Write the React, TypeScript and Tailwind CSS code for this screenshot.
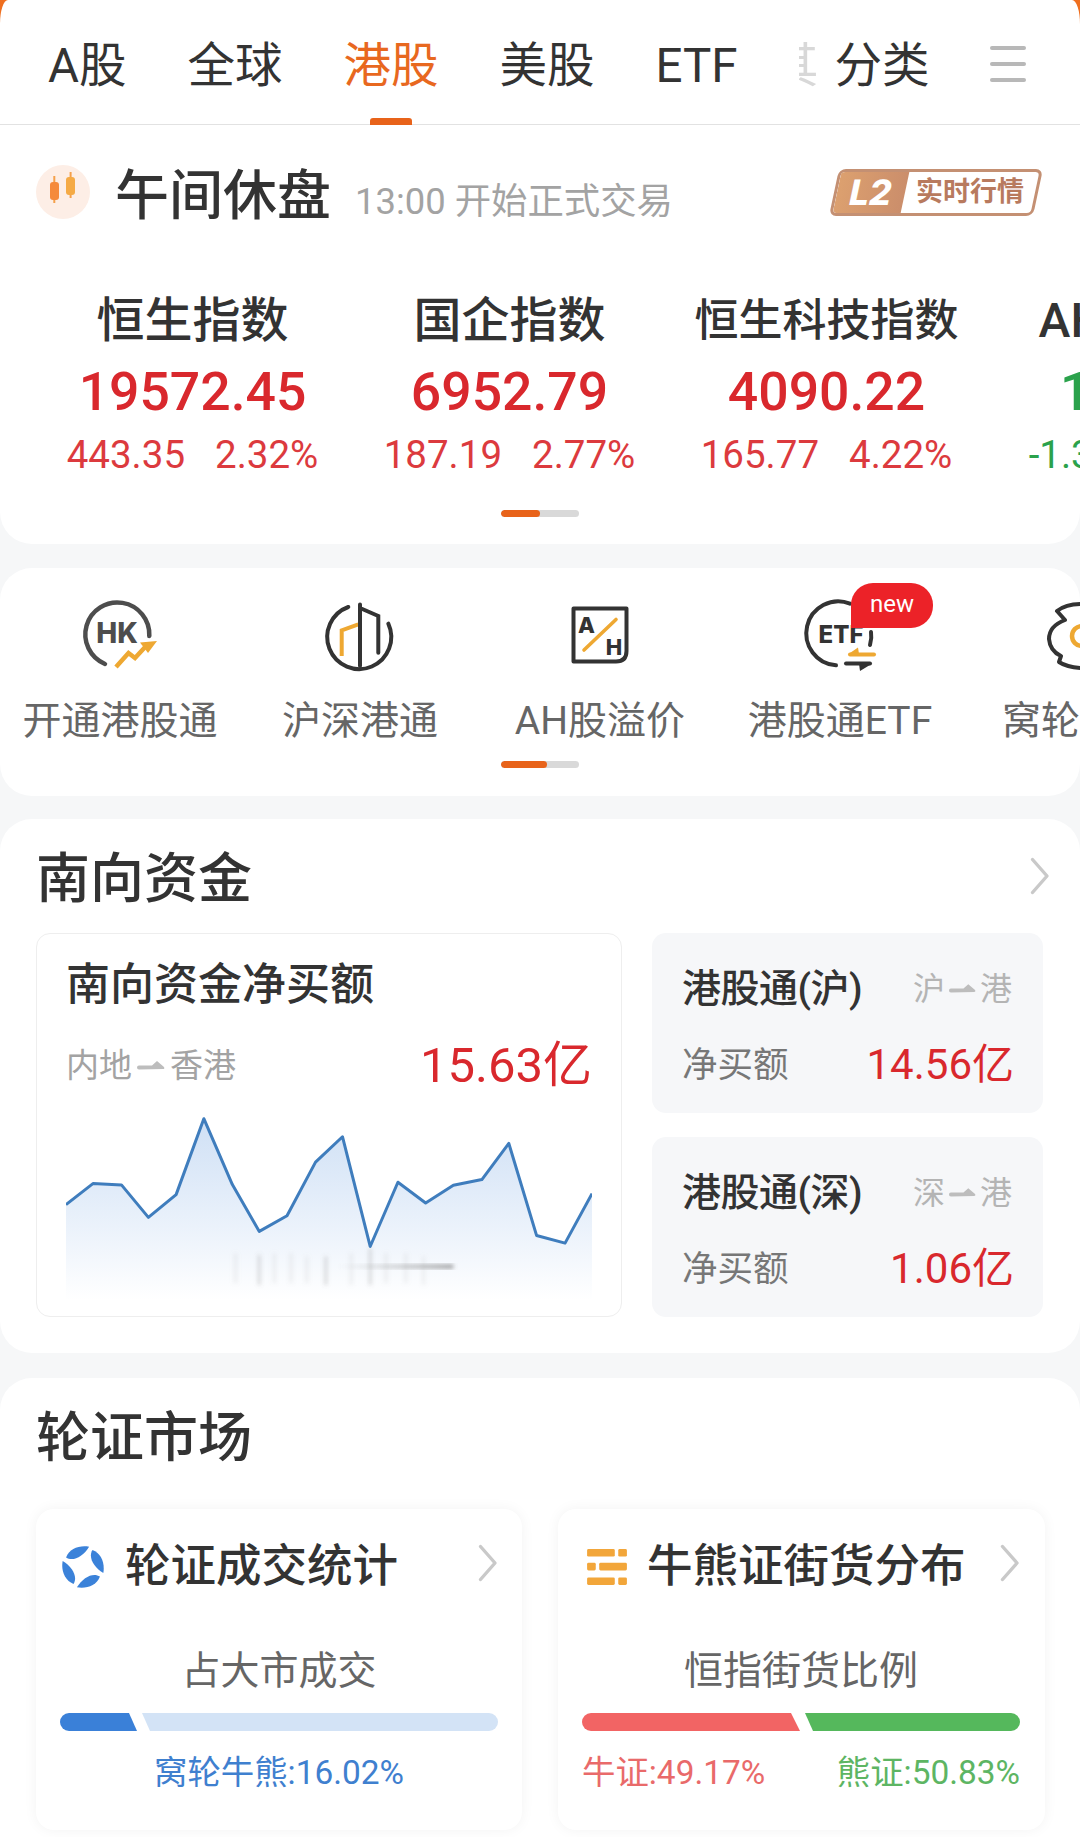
import React from 'react';

const RED = 'text-[#d9282d]';

const tabs = ['A股', '全球', '港股', '美股', 'ETF'];

const indexes = [
  { name: '恒生指数', value: '19572.45', diff: '443.35', pct: '2.32%', up: true },
  { name: '国企指数', value: '6952.79', diff: '187.19', pct: '2.77%', up: true },
  { name: '恒生科技指数', value: '4090.22', diff: '165.77', pct: '4.22%', up: true, small: true },
  { name: 'AH股溢价', value: '137.95', diff: '-1.32', pct: '-0.95%', up: false },
];

const chartPoints = [
  [92, 855], [160, 792], [232, 796], [300, 893], [370, 825], [440, 598], [512, 795],
  [580, 935], [650, 888], [722, 728], [790, 652], [860, 980], [930, 788], [1000, 850],
  [1070, 797], [1142, 780], [1210, 672], [1280, 947], [1352, 970], [1420, 822],
];

const linePath = chartPoints.map((p) => p.join(',')).join(' ');

// little grey arrow between the two market names
const FlowArrow = ({ className }: { className: string }) => (
  <svg viewBox="0 0 28 12" className={className}>
    <path d="M0 7.5 Q0 5.5 2 5.5 L15 5.5 L20 1 L27 7 Q28 9 26 9 L2 9.5 Q0 9.5 0 7.5Z" fill="#bdbdbd" />
  </svg>
);

const Chevron = ({ className }: { className: string }) => (
  <svg viewBox="0 0 20 38" className={className} fill="none">
    <path d="M2.5 2.5 L17 19 L2.5 35.5" stroke="#c9c9c9" strokeWidth="3.4" strokeLinecap="round" strokeLinejoin="round" />
  </svg>
);

const IconHK = () => (
  <svg viewBox="0 0 80 80" className="w-20 h-20" fill="none">
    <path d="M25 68 A32 32 0 1 1 69.3 40" stroke="#4d4d4d" strokeWidth="4.5" strokeLinecap="round" />
    <text x="37" y="47" textAnchor="middle" fontSize="28" fontWeight="800" fill="#4d4d4d" fontFamily="Inter, sans-serif">HK</text>
    <path d="M36 71 L48.5 57 L55 62 L67 49" stroke="#eea832" strokeWidth="4.5" strokeLinejoin="miter" />
    <path d="M60 46.5 L77 45 L68 57Z" fill="#eea832" />
  </svg>
);

const IconBuilding = () => (
  <svg viewBox="0 0 80 80" className="w-20 h-20" fill="none">
    <path d="M21.7 60 L21.7 34.3 L38.3 28.3" stroke="#eea832" strokeWidth="4" />
    <path d="M28.3 11 A32 32 0 1 0 68.3 27.7" stroke="#333" strokeWidth="4" strokeLinecap="round" />
    <path d="M40 8.5 L40 70 M40 12 L58.3 20 L58.3 56.7" stroke="#333" strokeWidth="4" strokeLinecap="round" />
  </svg>
);

const IconAH = () => (
  <svg viewBox="0 0 80 80" className="w-20 h-20" fill="none">
    <path d="M14 12.5 L66.5 12.5 L66.5 55 Q66.5 65.5 56 65.5 L13.5 65.5 L13.5 12.5Z" stroke="#333" strokeWidth="4" strokeLinejoin="round" />
    <text x="26.5" y="37" textAnchor="middle" fontSize="22" fontWeight="800" fill="#333" fontFamily="Inter, sans-serif">A</text>
    <text x="54" y="59" textAnchor="middle" fontSize="22" fontWeight="800" fill="#333" fontFamily="Inter, sans-serif">H</text>
    <path d="M24 54 L56 23.5" stroke="#eea832" strokeWidth="3.6" strokeLinecap="round" />
  </svg>
);

const IconETF = () => (
  <svg viewBox="0 0 80 80" className="w-20 h-20" fill="none">
    <path d="M36 69.3 A32 32 0 1 1 50 7.6" stroke="#333" strokeWidth="4" strokeLinecap="round" />
    <path d="M71 36 Q72 42 70 49" stroke="#333" strokeWidth="4" strokeLinecap="round" />
    <text x="41" y="47" textAnchor="middle" fontSize="24" fontWeight="800" fill="#333" fontFamily="Inter, sans-serif">ETF</text>
    <path d="M50 58.5 L74 58.5" stroke="#eea832" strokeWidth="4" strokeLinecap="round" />
    <path d="M48.5 58 L58 51.5 L59 58Z" fill="#eea832" />
    <path d="M46 67.5 L70 67.5" stroke="#333" strokeWidth="4" strokeLinecap="round" />
    <path d="M71.5 68 L60 75 L59 68Z" fill="#333" />
  </svg>
);

const IconWarrant = () => (
  <svg viewBox="0 0 80 80" className="w-20 h-20" fill="none">
    <path d="M44 8 Q27 7 17 15 L25 24 Q9 30 9 43 Q10 55 21 60 L19 66 Q28 72 44 72" stroke="#333" strokeWidth="4" strokeLinecap="round" strokeLinejoin="round" />
    <path d="M42 30 A10 10 0 0 0 42 50" stroke="#eea832" strokeWidth="4.5" strokeLinecap="round" />
  </svg>
);

const IconSwirl = () => (
  <svg viewBox="38 38 124 124" className="ml-[2px] w-[42px] h-[42px] shrink-0">
    {[0, 90, 180, 270].map((deg) => (
      <path key={deg} d="M118 40 C90 35 60 45 50 72 C70 85 100 70 118 40Z" fill="#3b82d9" transform={`rotate(${deg} 100 100)`} />
    ))}
  </svg>
);

const IconBars = () => (
  <svg viewBox="35 45 115 104" className="w-[40px] h-[36px] shrink-0" fill="#f2a63a">
    <rect x="35" y="45" width="80" height="22" rx="4" />
    <rect x="125" y="45" width="25" height="22" rx="4" />
    <rect x="35" y="85" width="25" height="22" rx="4" />
    <rect x="70" y="85" width="80" height="22" rx="4" />
    <rect x="35" y="127" width="80" height="22" rx="4" />
    <rect x="125" y="127" width="25" height="22" rx="4" />
  </svg>
);

const shortcuts = [
  { label: '开通港股通', icon: <IconHK /> },
  { label: '沪深港通', icon: <IconBuilding /> },
  { label: 'AH股溢价', icon: <IconAH /> },
  { label: '港股通ETF', icon: <IconETF />, isNew: true },
  { label: '窝轮牛熊', icon: <IconWarrant /> },
];

const ScrollDots = ({ fill }: { fill: string }) => (
  <div className="mx-auto w-[78px] h-[7px] rounded-full bg-[#d9d9d9] overflow-hidden">
    <div className={`h-full rounded-full bg-[#e8631a] ${fill}`} />
  </div>
);

const MiniCard = ({ title, from, value }: { title: string; from: string; value: string }) => (
  <div className="h-[180px] rounded-[14px] bg-[#f6f7f9] pl-[30px] pr-[31px] pt-[31px]">
    <div className="flex items-center justify-between h-[50px]">
      <span className="text-[39px] leading-[50px] font-medium text-[#333] tracking-[-0.5px]">{title}</span>
      <span className="flex items-center text-[32px] leading-[50px] text-[#b4b4b4]">
        {from}
        <FlowArrow className="w-[27px] h-[12px] mx-[4px]" />
        港
      </span>
    </div>
    <div className="flex items-center justify-between h-[50px] mt-[26px]">
      <span className="text-[35.5px] leading-[50px] text-[#777]">净买额</span>
      <span className={`text-[42px] leading-[50px] -mr-[2px] ${RED}`}>{value}</span>
    </div>
  </div>
);

export default function App() {
  return (
    <div className="w-[1080px] h-[1837px] overflow-hidden bg-[#f6f7f8] font-['Roboto','Noto_Sans_CJK_SC',sans-serif]">
      {/* market tabs */}
      <div className="bg-[#ef6f1f]">
        <div className="h-[125px] bg-white rounded-t-[8px_24px] border-b border-[#e2e2e2] flex items-center pl-[48px] pr-[54px] pt-[8px] text-[47.5px] leading-[60px] text-[#333]">
          {tabs.map((tab) => (
            <div key={tab} className="relative h-full flex items-center shrink-0 mr-[61px]">
              <span className={tab === '港股' ? 'text-[#e8681f]' : ''}>{tab}</span>
              {tab === '港股' && (
                <span className="absolute left-1/2 -translate-x-1/2 bottom-[-1px] w-[42px] h-[7px] rounded-t-[3px] bg-[#e8631a]" />
              )}
            </div>
          ))}
          <div className="w-[20px] overflow-hidden flex justify-end shrink-0 text-[#d4d4d4] opacity-90">
            <span className="shrink-0">其</span>
          </div>
          <span className="ml-[16px] shrink-0">分类</span>
          <div className="ml-auto -mt-[5px] flex flex-col gap-[12px] w-[36px] shrink-0">
            <span className="h-[4px] rounded-full bg-[#b8b8b8]" />
            <span className="h-[4px] rounded-full bg-[#b8b8b8]" />
            <span className="h-[4px] rounded-full bg-[#b8b8b8]" />
          </div>
        </div>
      </div>

      {/* status + indexes */}
      <div className="bg-white rounded-b-[32px] overflow-hidden pb-[27px]">
        <div className="h-[134px] flex items-center pl-[36px] pr-[37px]">
          <div className="w-[54px] h-[54px] rounded-full bg-[#fdeee6] shrink-0">
            <svg viewBox="0 0 54 54" className="w-full h-full">
              <path d="M18.3 11 V38 M34.6 7 V33" stroke="#f5a04a" strokeWidth="2" />
              <rect x="14" y="17" width="9" height="18" rx="3" fill="#f58a3c" />
              <rect x="30" y="12" width="9" height="18" rx="3" fill="#f5aa45" />
            </svg>
          </div>
          <span className="ml-[25px] mt-[9px] text-[54px] leading-[64px] font-medium text-[#333]">午间休盘</span>
          <span className="ml-[24px] mt-[19px] text-[36.4px] leading-[50px] text-[#a3a3a3]">13:00 开始正式交易</span>
          <div className="ml-auto mr-[5px] w-[204px] h-[47px] -skew-x-[12deg] rounded-[7px] border-[3px] border-[#c49073] flex overflow-hidden bg-white">
            <div className="w-[68px] bg-gradient-to-r from-[#dca06f] to-[#cb8e6b] flex items-center justify-center">
              <span className="text-[35px] leading-none font-extrabold text-white font-['Inter',sans-serif]">L2</span>
            </div>
            <div className="flex-1 flex items-center justify-center">
              <span className="skew-x-[12deg] text-[27px] leading-none font-bold text-[#b87a5e]">实时行情</span>
            </div>
          </div>
        </div>

        <div className="flex pt-[32px] pl-[34px]">
          {indexes.map((item) => (
            <div key={item.name} className="w-[317px] shrink-0 flex flex-col items-center">
              <span className={`leading-[60px] font-medium text-[#333] whitespace-nowrap ${item.small ? 'text-[44px]' : 'text-[48px]'}`}>{item.name}</span>
              <span className={`mt-[9px] text-[53.5px] leading-[64px] font-medium ${item.up ? RED : 'text-[#2ba24c]'}`}>{item.value}</span>
              <div className={`mt-[9px] flex gap-[30px] text-[38.5px] leading-[44px] whitespace-nowrap ${item.up ? 'text-[#dc3a3e]' : 'text-[#2ba24c]'}`}>
                <span>{item.diff}</span>
                <span>{item.pct}</span>
              </div>
            </div>
          ))}
        </div>
        <div className="mt-[33px]">
          <ScrollDots fill="w-[39px]" />
        </div>
      </div>

      {/* shortcuts */}
      <div className="mt-[24px] bg-white rounded-[32px] overflow-hidden pt-[28px] pb-[28px]">
        <div className="flex">
          {shortcuts.map((s) => (
            <div key={s.label} className="w-[240px] shrink-0 flex flex-col items-center relative">
              {s.icon}
              {s.isNew && (
                <span className="absolute left-[131px] top-[-13px] w-[82px] h-[45px] rounded-[22px] rounded-bl-none bg-[#ec2228] text-white text-[24px] leading-[43px] text-center">new</span>
              )}
              <span className="mt-[20px] text-[39px] leading-[50px] text-[#666] whitespace-nowrap">{s.label}</span>
            </div>
          ))}
        </div>
        <div className="mt-[15px]">
          <ScrollDots fill="w-[46px]" />
        </div>
      </div>

      {/* southbound funds */}
      <div className="mt-[23px] bg-white rounded-[32px] pt-[30px] pb-[36px]">
        <div className="flex items-center justify-between pl-[36px] pr-[30px] h-[60px]">
          <span className="mt-[2px] text-[54px] leading-[60px] font-medium text-[#333]">南向资金</span>
          <Chevron className="w-[20px] h-[38px] -mt-[6px]" />
        </div>
        <div className="mt-[24px] flex gap-[30px] pl-[36px] pr-[37px]">
          <div className="w-[586px] h-[384px] rounded-[14px] border border-[#eeeeee] pt-[26px] px-[29px]">
            <div className="text-[44px] leading-[50px] font-medium text-[#333]">南向资金净买额</div>
            <div className="mt-[26px] h-[60px] flex items-center justify-between">
              <span className="flex items-center text-[33px] leading-[60px] text-[#a3a3a3]">
                内地
                <FlowArrow className="w-[28px] h-[12px] mx-[5px]" />
                香港
              </span>
              <span className={`text-[49px] leading-[60px] ${RED}`}>15.63亿</span>
            </div>
            <svg viewBox="92 590 1328 550" preserveAspectRatio="none" className="mt-[20px] block w-[526px] h-[184px]">
              <defs>
                <linearGradient id="area" x1="0" y1="0" x2="0" y2="1">
                  <stop offset="0" stopColor="#cfe0f5" />
                  <stop offset="0.6" stopColor="#ebf2fb" />
                  <stop offset="1" stopColor="#ffffff" />
                </linearGradient>
                <linearGradient id="smudge" x1="0" y1="0" x2="1" y2="0">
                  <stop offset="0" stopColor="#999" stopOpacity="0" />
                  <stop offset="1" stopColor="#777" stopOpacity="0.75" />
                </linearGradient>
                <filter id="blur" x="-10%" y="-30%" width="120%" height="160%">
                  <feGaussianBlur stdDeviation="5 6" />
                </filter>
              </defs>
              <polygon points={`92,1140 ${linePath} 1420,1140`} fill="url(#area)" />
              <rect x="780" y="1034" width="290" height="12" fill="url(#smudge)" filter="url(#blur)" />
              <path d="M520 1000V1090 M618 1000V1090 M660 1000V1090 M700 1010V1090 M812 1000V1095 M900 1000V1090 M950 1000V1090 M995 1010V1095" stroke="#999" strokeOpacity="0.16" strokeWidth="8" filter="url(#blur)" />
              <path d="M580 1005V1095 M748 1010V1095 M860 985V1095" stroke="#777" strokeOpacity="0.4" strokeWidth="5" filter="url(#blur)" />
              <polyline points={linePath} fill="none" stroke="#3f7dbd" strokeWidth="3" vectorEffect="non-scaling-stroke" strokeLinejoin="round" />
            </svg>
          </div>
          <div className="w-[391px] flex flex-col gap-[24px]">
            <MiniCard title="港股通(沪)" from="沪" value="14.56亿" />
            <MiniCard title="港股通(深)" from="深" value="1.06亿" />
          </div>
        </div>
      </div>

      {/* warrants */}
      <div className="mt-[25px] bg-white rounded-t-[32px] pt-[31px] h-[460px]">
        <div className="pl-[36px] h-[60px] text-[54px] leading-[60px] font-medium text-[#333]">轮证市场</div>
        <div className="mt-[40px] flex gap-[36px] pl-[36px]">
          <div className="w-[486px] h-[321px] rounded-[18px] bg-white shadow-[0_0_14px_rgba(0,0,0,0.05)] pt-[33px] pl-[24px] pr-[24px]">
            <div className="flex items-center h-[50px]">
              <IconSwirl />
              <span className="ml-[21px] text-[45.5px] leading-[50px] font-medium text-[#333] whitespace-nowrap">轮证成交统计</span>
              <Chevron className="ml-auto w-[20px] h-[38px] -mt-[8px]" />
            </div>
            <div className="mt-[54px] text-center text-[39px] leading-[50px] text-[#666]">占大市成交</div>
            <div className="mt-[17px] flex gap-[5px] h-[18px]">
              <div className="w-[77px] rounded-l-full bg-[#3a80d8] [clip-path:polygon(0_0,calc(100%-8px)_0,100%_100%,0_100%)]" />
              <div className="flex-1 rounded-r-full rounded-l-sm bg-[#d3e3f6] [clip-path:polygon(0_0,100%_0,100%_100%,8px_100%)]" />
            </div>
            <div className="mt-[22px] text-center text-[33.4px] leading-[40px] text-[#3f80cf]">窝轮牛熊:16.02%</div>
          </div>
          <div className="w-[487px] h-[321px] rounded-[18px] bg-white shadow-[0_0_14px_rgba(0,0,0,0.05)] pt-[33px] pl-[24px] pr-[25px]">
            <div className="flex items-center h-[50px]">
              <div className="w-[45px] shrink-0 pl-[5px]">
                <IconBars />
              </div>
              <span className="ml-[20px] text-[45.5px] leading-[50px] font-medium text-[#333] whitespace-nowrap">牛熊证街货分布</span>
              <Chevron className="ml-auto w-[20px] h-[38px] -mt-[8px]" />
            </div>
            <div className="mt-[54px] text-center text-[39px] leading-[50px] text-[#666]">恒指街货比例</div>
            <div className="mt-[17px] flex gap-[5px] h-[18px]">
              <div className="w-[218px] rounded-l-full bg-[#f26464] [clip-path:polygon(0_0,calc(100%-9px)_0,100%_100%,0_100%)]" />
              <div className="flex-1 rounded-r-full bg-[#55b85c] [clip-path:polygon(0_0,100%_0,100%_100%,8px_100%)]" />
            </div>
            <div className="mt-[22px] flex justify-between text-[33.4px] leading-[40px]">
              <span className="text-[#e96a6a]">牛证:49.17%</span>
              <span className="text-[#5db563]">熊证:50.83%</span>
            </div>
          </div>
        </div>
      </div>
    </div>
  );
}
